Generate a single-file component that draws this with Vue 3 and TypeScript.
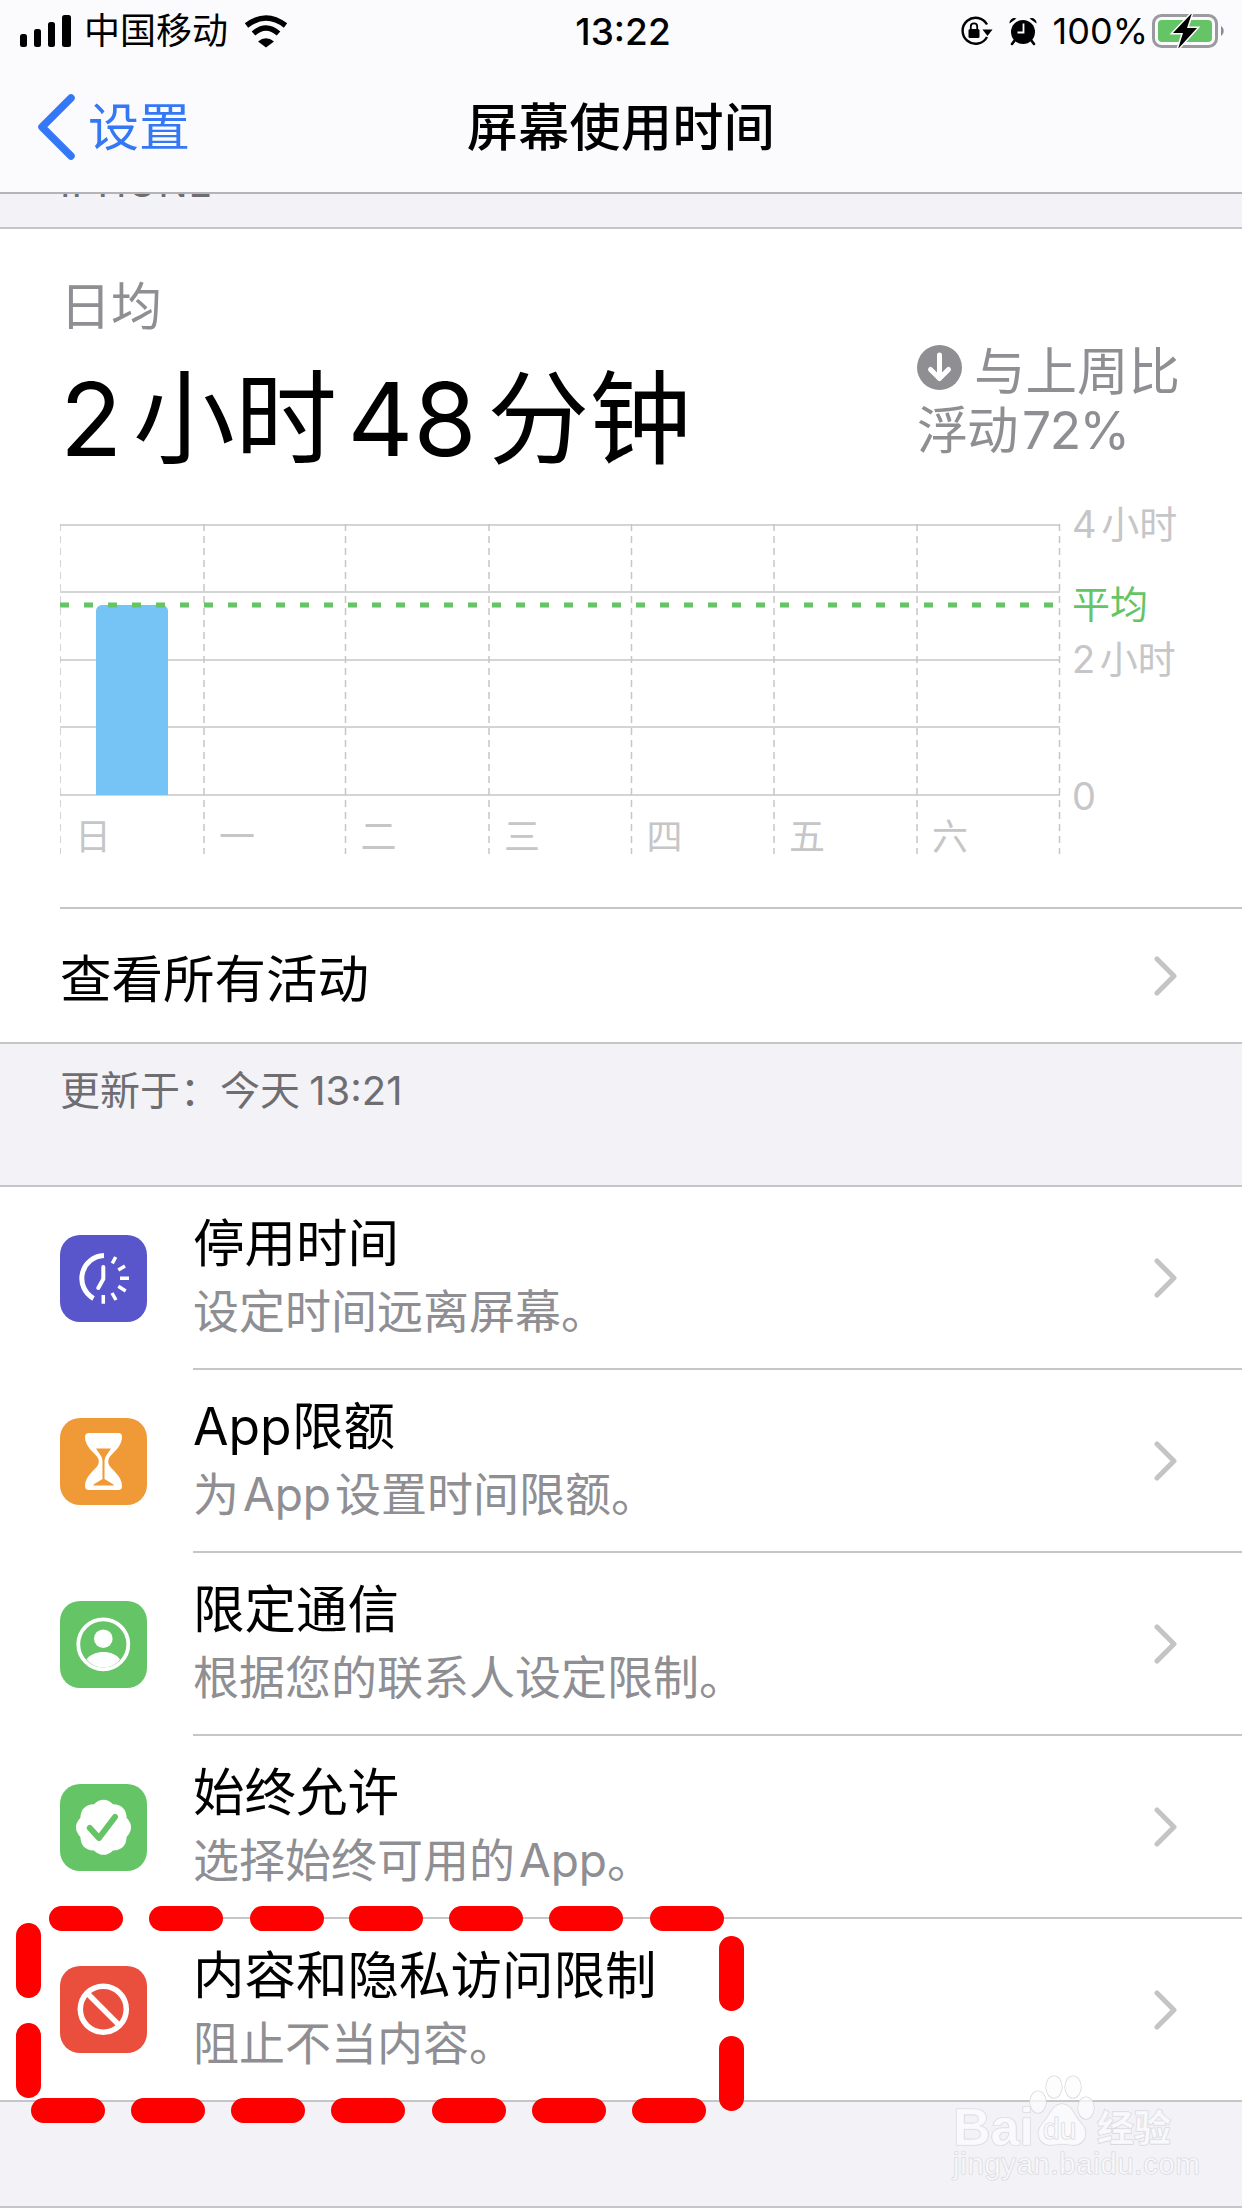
<script setup lang="ts">
// chart geometry, in px inside the 1182x365 svg
const dayX = [0, 144, 285.5, 429, 571.5, 714, 857, 999.5];
const gridY = [25, 92, 160, 227, 295];
const days = ['日', '一', '二', '三', '四', '五', '六'];
const axis = [
  { label: '4 小时', y: 39, green: false },
  { label: '平均', y: 119, green: true },
  { label: '2 小时', y: 174, green: false },
  { label: '0', y: 311, green: false },
];

const rows = [
  { key: 'downtime', title: '停用时间', sub: '设定时间远离屏幕。' },
  { key: 'limits', title: 'App 限额', sub: '为 App 设置时间限额。' },
  { key: 'comm', title: '限定通信', sub: '根据您的联系人设定限制。' },
  { key: 'allow', title: '始终允许', sub: '选择始终可用的 App。' },
  { key: 'content', title: '内容和隐私访问限制', sub: '阻止不当内容。' },
];

// the hand-drawn red dashes over the last row
const marks = [
  ...[49, 149, 250, 349, 449, 549, 650].map((x) => ({ x, y: 1906, w: 74, h: 25 })),
  ...[31, 131, 231, 331, 432, 532, 632].map((x) => ({ x, y: 2098, w: 74, h: 25 })),
  { x: 16, y: 1923, w: 25, h: 75 },
  { x: 16, y: 2023, w: 25, h: 75 },
  { x: 719, y: 1936, w: 25, h: 75 },
  { x: 719, y: 2036, w: 25, h: 75 },
];

// scalloped badge: eight rounded lobes
function badgePath(): string {
  const at = (r: number, a: number) =>
    `${(43.5 + r * Math.cos(a)).toFixed(1)} ${(43.3 + r * Math.sin(a)).toFixed(1)}`;
  const step = Math.PI / 4;
  let d = 'M' + at(25, -Math.PI / 2 - step / 2);
  for (let i = 0; i < 8; i++) {
    const mid = -Math.PI / 2 + i * step;
    d += 'Q' + at(32, mid) + ' ' + at(25, mid + step / 2);
  }
  return d + 'Z';
}
</script>

<template>
  <div class="page" lang="zh-CN">
    <header class="top">
      <div class="status">
        <div class="status-left">
          <svg class="signal" width="52" height="33" viewBox="0 0 52 33">
            <rect x="0" y="19" width="7" height="13" rx="2.5" />
            <rect x="14" y="14" width="7" height="18" rx="2.5" />
            <rect x="28" y="7" width="7" height="25" rx="2.5" />
            <rect x="42" y="0" width="9" height="32" rx="2.5" />
          </svg>
          <span class="carrier">中国移动</span>
          <svg class="wifi" width="46" height="34" viewBox="0 0 46 34">
            <path d="M3.5 11.5Q23-3.5 42.500 11.5" fill="none" stroke="#000" stroke-width="5.500" />
            <path d="M10.500 19.500Q23 8.500 35.500 19.500" fill="none" stroke="#000" stroke-width="5.500" />
            <path d="M15 27.500Q23 21 31 27.500L23 33.500Z" />
          </svg>
        </div>
        <div class="clock">13:22</div>
        <div class="status-right">
          <svg width="34" height="30" viewBox="0 0 34 30">
            <path d="M28 8.500A13 13 0 1 0 28 21" fill="none" stroke="#000" stroke-width="2.400" />
            <path d="M33.500 13.500H23.500L28.500 20Z" />
            <rect x="9.500" y="13" width="11" height="9" rx="1.500" />
            <path d="M11.800 13V10.500a3.200 3.200 0 0 1 6.400 0V13" fill="none" stroke="#000" stroke-width="1.800" />
          </svg>
          <svg class="alarm" width="30" height="30" viewBox="0 0 30 30">
            <circle cx="15" cy="16" r="12" />
            <path d="M1.500 7.500a5 5 0 0 1 7-5ZM28.500 7.500a5 5 0 0 0-7-5Z" />
            <path d="M7 24l-3 4M23 24l3 4" stroke="#000" stroke-width="2.600" stroke-linecap="round" />
            <path d="M15.500 7.500V16.500H9.500" fill="none" stroke="#fff" stroke-width="1.800" />
          </svg>
          <span class="percent">100%</span>
          <svg class="battery" width="74" height="34" viewBox="0 0 74 34">
            <rect x="1.500" y="1.500" width="63" height="31" rx="8" fill="none" stroke="#9b9b9f" stroke-width="3" />
            <rect x="6" y="6" width="54" height="22" rx="4" fill="#65c466" />
            <path d="M69 12a6 6 0 0 1 0 10Z" fill="#8c8c90" />
            <path d="M40-1 21 19H31L26 35 45 14H35Z" stroke="#fbfbfd" stroke-width="3" paint-order="stroke" />
          </svg>
        </div>
      </div>
      <nav class="nav">
        <div class="back">
          <svg width="40" height="66" viewBox="0 0 40 66">
            <path d="M35 4 6 33 35 62" fill="none" stroke="#3478f6" stroke-width="7.500" stroke-linecap="round" stroke-linejoin="round" />
          </svg>
          <span>设置</span>
        </div>
        <div class="nav-title">屏幕使用时间</div>
      </nav>
    </header>

    <div class="section-head"><span>IPHONE</span></div>

    <section class="card">
      <div class="summary">
        <div>
          <div class="avg-label">日均</div>
          <div class="avg-value">2 小时 48 分钟</div>
        </div>
        <div class="compare">
          <div class="compare-line">
            <svg width="45" height="45" viewBox="0 0 45 45">
              <circle cx="22.500" cy="22.500" r="22.500" fill="#8e8e93" />
              <path d="M22.500 10V33M13.500 24.500 22.500 33.500 31.500 24.500" fill="none" stroke="#fff" stroke-width="5" stroke-linecap="round" stroke-linejoin="round" />
            </svg>
            <span>与上周比</span>
          </div>
          <div class="compare-line compare-sub">浮动 72%</div>
        </div>
      </div>

      <svg class="chart" width="1182" height="365" viewBox="0 0 1182 365">
        <line v-for="x in dayX" :key="'v' + x" :x1="x" :x2="x" y1="25" y2="355" class="grid-v" />
        <line v-for="y in gridY" :key="'h' + y" x1="0" x2="1000" :y1="y + 1" :y2="y + 1" class="grid-h" />
        <path d="M36 296V112a6 6 0 0 1 6-6H102a6 6 0 0 1 6 6V296Z" fill="#76c3f6" />
        <line x1="0" x2="1000" y1="106" y2="106" class="avg-line" />
        <text v-for="(d, i) in days" :key="d" :x="dayX[i] + 33" y="351" text-anchor="middle" class="day">{{ d }}</text>
        <text v-for="a in axis" :key="a.label" x="1012" :y="a.y" class="tick" :class="{ 'tick-green': a.green }">{{ a.label }}</text>
      </svg>

      <div class="activity">
        <span>查看所有活动</span>
        <svg class="chevron" width="24" height="40" viewBox="0 0 24 40">
          <path d="M3 3 20 20 3 37" />
        </svg>
      </div>
    </section>

    <div class="updated">更新于：今天 13:21</div>

    <section class="card list">
      <div v-for="r in rows" :key="r.key" class="row">
        <svg class="app-icon" width="87" height="87" viewBox="0 0 87 87">
          <template v-if="r.key === 'downtime'">
            <rect width="87" height="87" rx="20" fill="#5856ca" />
            <g fill="none" stroke="#fff" stroke-linecap="butt">
              <path d="M44 20.500A23 23 0 0 0 33.500 63.500" stroke-width="5" />
              <path d="M43.300 32V44L38.300 53" stroke-width="4" stroke-linecap="round" stroke-linejoin="round" />
              <path d="M55.700 22 52.300 28.300M65 31 58.300 35M69 43.300H60M65.700 56 58.300 51.300M56 65 52 58M43.300 68.700V60" stroke-width="3.500" />
            </g>
          </template>
          <template v-else-if="r.key === 'limits'">
            <rect width="87" height="87" rx="20" fill="#f09a37" />
            <path d="M29 15H58.500Q62 15 62 19C62 29 52 35 49 40 48 42 48 45 49 47 52 52 62 58 62 68Q62 72 58.500 72H29Q25 72 25 68C25 58 35 52 38 47 39 45 39 42 38 40 35 35 25 29 25 19Q25 15 29 15Z" fill="#fff" />
            <path d="M36 30.500H51L46 38Q44.500 40 44.500 43V61L53.500 66.500V67.500H33.500V66.500L42.500 61V43Q42.500 40 41 38Z" fill="#f09a37" />
          </template>
          <template v-else-if="r.key === 'comm'">
            <rect width="87" height="87" rx="20" fill="#65c466" />
            <circle cx="43.300" cy="43.300" r="25" fill="none" stroke="#fff" stroke-width="3.800" />
            <circle cx="43.300" cy="37.700" r="9.300" fill="#fff" />
            <path d="M26.500 58.500C33 48.500 54 48.500 60 58.500 52 69 35 69 26.500 58.500Z" fill="#fff" />
          </template>
          <template v-else-if="r.key === 'allow'">
            <rect width="87" height="87" rx="20" fill="#65c466" />
            <path :d="badgePath()" fill="#fff" />
            <path d="M29.800 44 39 54 55 33" fill="none" stroke="#65c466" stroke-width="6" stroke-linecap="round" stroke-linejoin="round" />
          </template>
          <template v-else>
            <rect width="87" height="87" rx="20" fill="#ea4f3d" />
            <circle cx="43.300" cy="43.300" r="23" fill="none" stroke="#fff" stroke-width="5.500" />
            <path d="M27 27 59.600 59.600" stroke="#fff" stroke-width="5.500" />
          </template>
        </svg>
        <div class="row-body">
          <div class="row-text">
            <div class="row-title">{{ r.title }}</div>
            <div class="row-sub">{{ r.sub }}</div>
          </div>
          <svg class="chevron" width="24" height="40" viewBox="0 0 24 40">
            <path d="M3 3 20 20 3 37" />
          </svg>
        </div>
      </div>
    </section>

    <div class="foot"></div>

    <!-- annotation and watermark lying over the screenshot -->
    <svg class="overlay" width="1242" height="2208" viewBox="0 0 1242 2208">
      <rect v-for="(m, i) in marks" :key="i" :x="m.x" :y="m.y" :width="m.w" :height="m.h" rx="12.500" fill="#fe0000" />
      <g class="wm">
        <ellipse cx="1038" cy="2102" rx="8" ry="11" />
        <ellipse cx="1054" cy="2087" rx="8" ry="11" />
        <ellipse cx="1073" cy="2087" rx="8" ry="11" />
        <ellipse cx="1086" cy="2108" rx="8" ry="11" />
        <path d="M1062 2104C1072 2104 1074 2116 1082 2124 1090 2134 1084 2146 1072 2145 1066 2144 1058 2144 1052 2145 1040 2146 1034 2134 1042 2124 1050 2116 1052 2104 1062 2104Z" />
        <text x="953" y="2145" class="wm-bai">Bai</text>
        <text x="1043" y="2139" class="wm-du">du</text>
        <text x="1097" y="2142" class="wm-jy">经验</text>
        <text x="953" y="2174" class="wm-url">jingyan.baidu.com</text>
      </g>
    </svg>
  </div>
</template>

<style scoped>
.page {
  position: relative;
  width: 1242px;
  height: 2208px;
  overflow: hidden;
  background: #f2f2f7;
  color: #000;
  font-family: Inter, "Noto Sans CJK SC", sans-serif;
}

.top {
  height: 192px;
  box-sizing: content-box;
  background: #fbfbfd;
  border-bottom: 2px solid #b4b4b8;
}

.status {
  height: 62px;
  display: grid;
  grid-template-columns: 1fr auto 1fr;
  align-items: center;
  padding: 0 16px 0 20px;
}

.status-left,
.status-right {
  display: flex;
  align-items: center;
}

.status-right {
  justify-content: flex-end;
}

.carrier {
  margin-left: 12px;
  font-size: 36px;
  line-height: 44px;
}

.wifi {
  margin-left: 15px;
}

.clock {
  font-size: 37px;
  font-weight: 500;
}

.alarm {
  margin-left: 15px;
}

.percent {
  margin-left: 15px;
  font-size: 36px;
}

.battery {
  margin-left: 4px;
}

.nav {
  height: 130px;
  display: grid;
  grid-template-columns: 1fr auto 1fr;
  align-items: center;
}

.back {
  display: flex;
  align-items: center;
  padding-left: 36px;
  color: #3478f6;
  font-size: 51px;
  gap: 12px;
}

.back span,
.nav-title {
  padding-bottom: 7px;
}

.nav-title {
  font-size: 51px;
  font-weight: 500;
  letter-spacing: 0.4px;
}

.section-head {
  height: 33px;
  overflow: hidden;
  padding-left: 60px;
  color: #6d6d72;
  font-size: 39px;
  line-height: 39px;
  letter-spacing: 1px;
}

.section-head span {
  display: block;
  margin-top: -31px;
}

.card {
  background: #fff;
  border-top: 2px solid #c6c6c8;
  border-bottom: 2px solid #c6c6c8;
}

.summary {
  height: 270px;
  box-sizing: border-box;
  padding: 48px 0 0 60px;
  display: flex;
  justify-content: space-between;
}

.avg-label {
  font-size: 51px;
  line-height: 60px;
  color: #8e8e93;
}

.avg-value {
  margin-top: 22px;
  font-size: 102px;
  line-height: 120px;
  word-spacing: -18px;
  white-space: nowrap;
}

.compare {
  width: 325px;
  padding-top: 57px;
  color: #8e8e93;
  font-size: 51.5px;
}

.compare-line {
  display: flex;
  align-items: center;
  gap: 12px;
  height: 66px;
}

.compare-sub {
  display: block;
  margin-top: -3px;
  line-height: 66px;
  word-spacing: -8px;
  letter-spacing: -1.5px;
}

.chart {
  display: block;
  margin-left: 60px;
}

.grid-v {
  stroke: #c6c6c8;
  stroke-width: 1.5;
  stroke-dasharray: 7 5;
}

.grid-h {
  stroke: #c6c6c8;
  stroke-width: 1.5;
}

.avg-line {
  stroke: #65c466;
  stroke-width: 5;
  stroke-dasharray: 9 15;
}

.day {
  font-size: 36px;
  fill: #c6c6c8;
}

.tick {
  font-size: 38px;
  fill: #c6c6c8;
  word-spacing: -6px;
}

.tick-green {
  fill: #65c466;
}

.activity {
  margin: 43px 0 0 60px;
  height: 133px;
  padding-right: 64px;
  border-top: 2px solid #c6c6c8;
  display: flex;
  align-items: center;
  justify-content: space-between;
  font-size: 51.5px;
}

.chevron {
  flex: none;
  fill: none;
  stroke: #c4c4c7;
  stroke-width: 5;
  stroke-linecap: round;
  stroke-linejoin: round;
}

.updated {
  height: 141px;
  box-sizing: border-box;
  padding: 20px 0 0 60px;
  font-size: 40px;
  line-height: 54px;
  color: #6d6d72;
  word-spacing: -2px;
}

.row {
  display: flex;
  align-items: center;
  height: 183px;
}

.row:last-child {
  height: 181px;
}

.app-icon {
  flex: none;
  margin: 0 46px 0 60px;
}

.row-body {
  flex: 1;
  height: 100%;
  box-sizing: border-box;
  border-bottom: 2px solid #c6c6c8;
  display: flex;
  align-items: center;
  justify-content: space-between;
  padding-right: 64px;
}

.row:last-child .row-body {
  border-bottom: none;
}

.row-text {
  padding-bottom: 6px;
}

.row-title {
  font-size: 51.5px;
  line-height: 62px;
  word-spacing: -14px;
}

.row-sub {
  margin-top: 10px;
  font-size: 46px;
  line-height: 54px;
  color: #8e8e93;
  word-spacing: -9px;
}

.foot {
  height: 106px;
  box-sizing: border-box;
  border-bottom: 2px solid #c6c6c8;
}

.overlay {
  position: absolute;
  left: 0;
  top: 0;
  pointer-events: none;
}

.wm {
  fill: rgba(252, 252, 254, 0.75);
  stroke: #d6d6da;
  stroke-width: 1.2;
  paint-order: stroke;
}

.wm-bai {
  font-family: "Liberation Sans", sans-serif;
  font-size: 52px;
  font-weight: 700;
}

.wm-du {
  font-family: "Liberation Sans", sans-serif;
  font-size: 30px;
}

.wm-jy {
  font-size: 37px;
  font-weight: 700;
}

.wm-url {
  font-family: "Liberation Sans", sans-serif;
  font-size: 29px;
  letter-spacing: 0.8px;
}
</style>

<style>
html,
body {
  margin: 0;
  background: #f2f2f7;
}
</style>
